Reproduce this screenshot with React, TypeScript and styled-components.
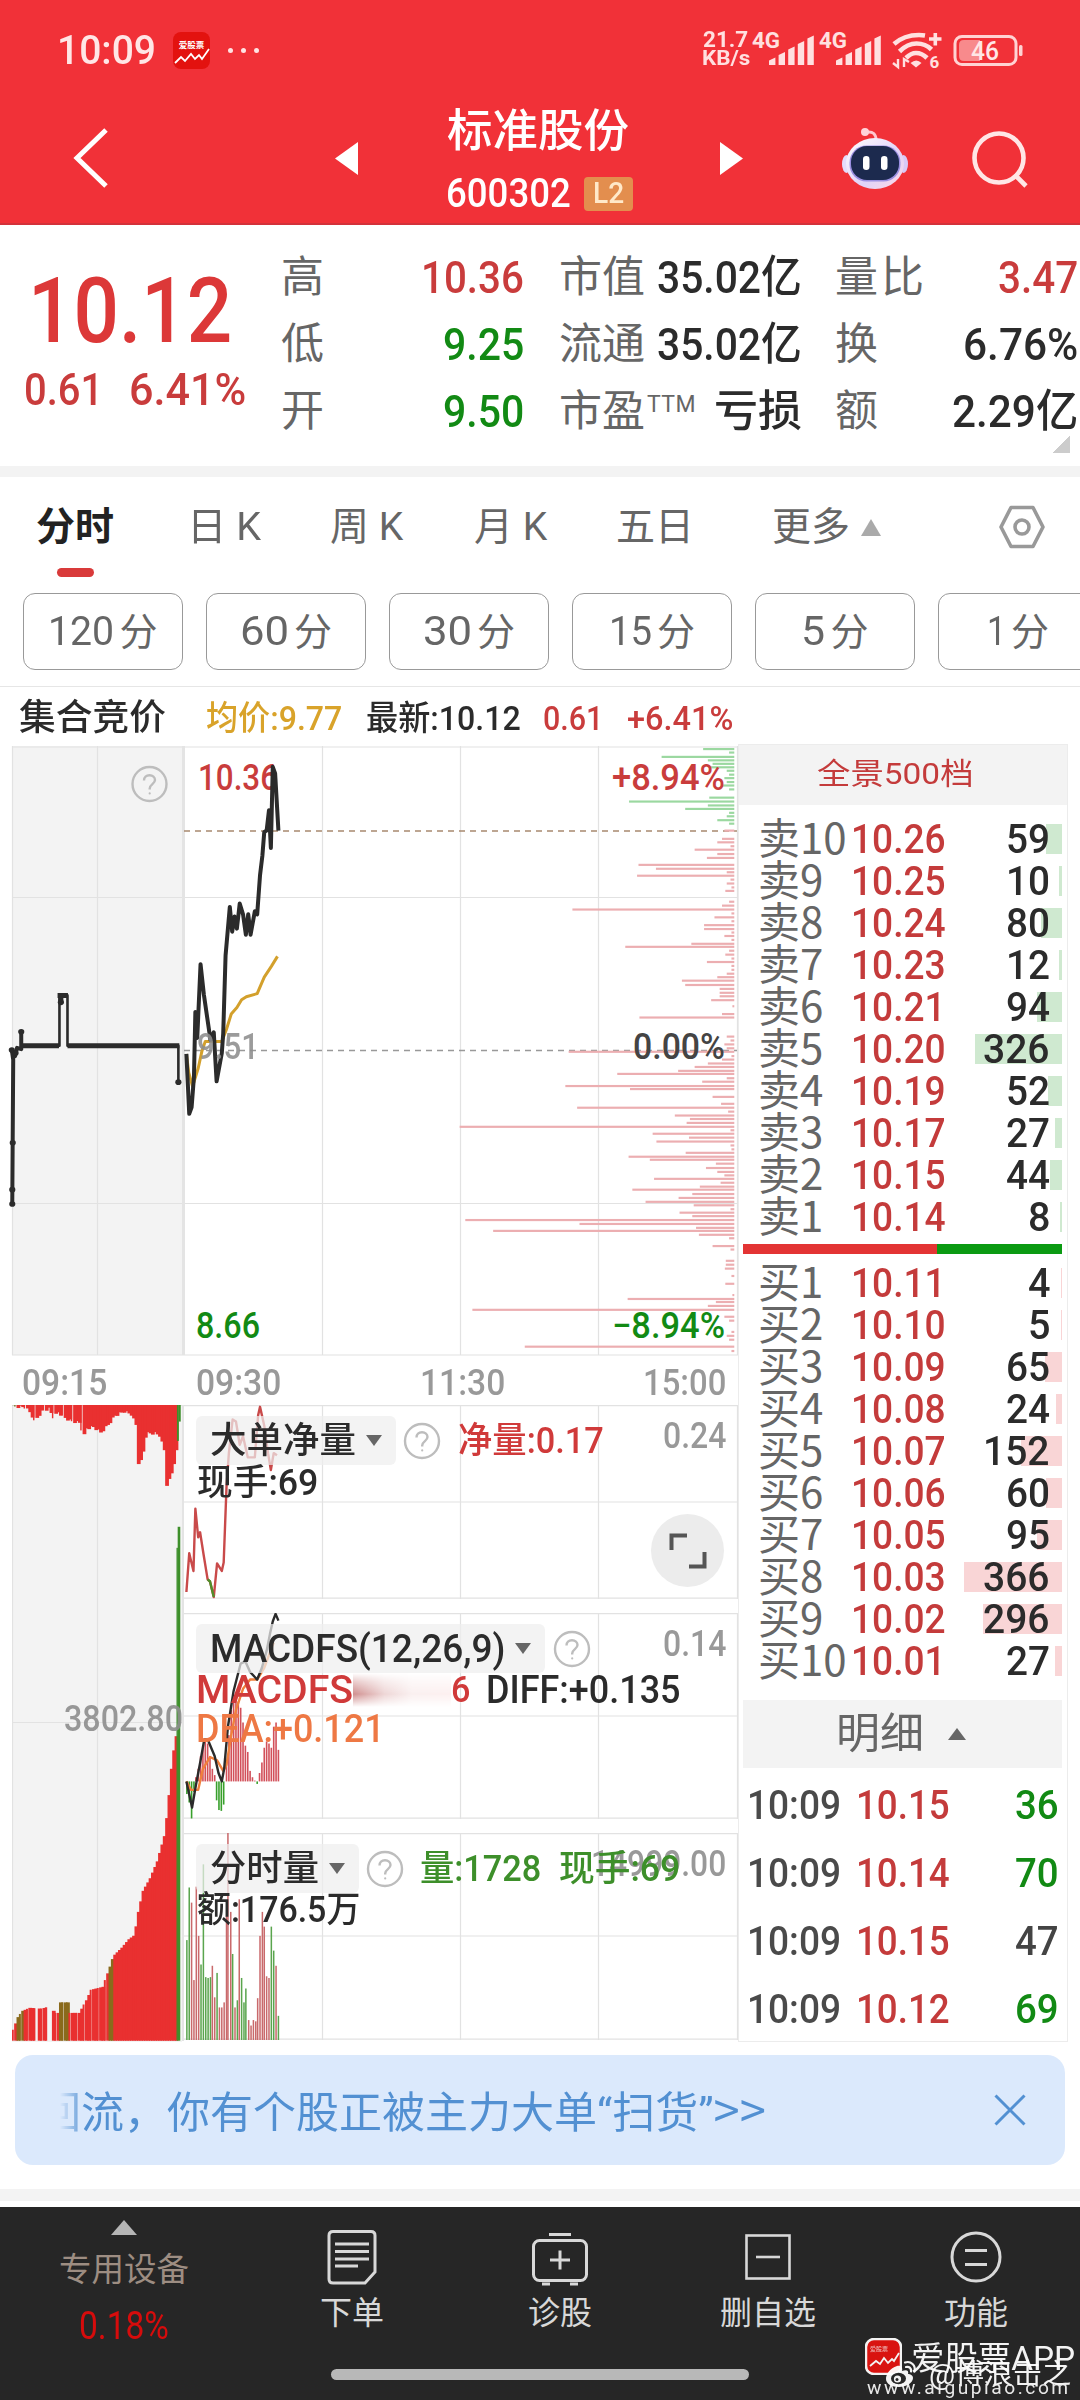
import React, { useLayoutEffect, useRef, useState } from "react";
import styled, { createGlobalStyle } from "styled-components";

const RED = "#d93a3a";
const GREEN = "#128a14";
const INK = "#2b2b2b";
const GREY = "#666";
const MUTED = "#999";
const LINE = "#e2e2e2";
const FONT = `Roboto, "Noto Sans CJK SC", sans-serif`;

const Global = createGlobalStyle`
  * { box-sizing: border-box; }
  html, body { margin: 0; padding: 0; background: #fff; }
  body { font-family: ${FONT}; color: ${INK}; overflow-x: hidden; }
  svg { display: block; flex: none; }
`;

/* ---------- text fitted to a column width ---------- */
const FitBox = styled.span<{ $w: number; $size: number; $color?: string; $weight?: number; $ml?: number }>`
  display: block;
  flex: none;
  width: ${(p) => p.$w}px;
  height: ${(p) => p.$size}px;
  margin-left: ${(p) => p.$ml ?? 0}px;
  font-size: ${(p) => p.$size}px;
  line-height: ${(p) => p.$size}px;
  font-weight: ${(p) => p.$weight ?? 400};
  color: ${(p) => p.$color ?? INK};
  white-space: pre;
`;
const FitInner = styled.span`
  display: inline-block;
  transform-origin: 0 50%;
`;
type FitProps = { w: number; size: number; color?: string; weight?: number; ml?: number; children: React.ReactNode };
function Fit({ w, size, color, weight, ml, children }: FitProps) {
  const ref = useRef<HTMLSpanElement>(null);
  const [k, setK] = useState(1);
  useLayoutEffect(() => {
    if (ref.current) setK(w / ref.current.offsetWidth);
  }, [w, size, weight]);
  return (
    <FitBox $w={w} $size={size} $color={color} $weight={weight} $ml={ml}>
      <FitInner ref={ref} style={{ transform: `scaleX(${k})` }}>{children}</FitInner>
    </FitBox>
  );
}

/* ---------- page ---------- */
const Page = styled.div`
  width: 1080px;
  height: 2400px;
  overflow: hidden;
  background: #fff;
  display: flex;
  flex-direction: column;
`;
const Header = styled.header`
  height: 225px;
  flex: none;
  background: #f13138;
  border-bottom: 2px solid #d3323a;
`;
const StatusBar = styled.div`
  height: 100px;
  display: flex;
  align-items: center;
  padding-left: 57px;
`;
const AppIconWrap = styled.div`
  margin-left: 17px;
`;
const Dots = styled.div`
  display: flex;
  gap: 8px;
  margin-left: 18px;
  i { width: 5px; height: 5px; border-radius: 50%; background: #ffe3e3; }
`;
const Speed = styled.div`
  margin-left: 443px;
  padding-bottom: 2px;
`;
const Status = styled.div`
  margin-left: 2px;
`;
const NavBar = styled.nav`
  height: 117px;
  display: flex;
  align-items: center;
  padding-left: 70px;
`;
const NavItem = styled.div<{ $ml?: number }>`
  margin-left: ${(p) => p.$ml ?? 0}px;
`;
const Title = styled.div`
  margin-left: 89px;
  width: 190px;
  padding-top: 6px;
`;
const CodeRow = styled.div`
  display: flex;
  align-items: center;
  gap: 13px;
  margin-top: 19px;
`;
const Badge = styled.div`
  width: 49px;
  height: 34px;
  border-radius: 4px;
  background: #e38e4e;
  display: flex;
  align-items: center;
  justify-content: center;
`;

const Quote = styled.section`
  height: 241px;
  flex: none;
  display: flex;
  padding-top: 19px;
`;
const PriceBlock = styled.div`
  width: 281px;
  padding: 22px 0 0 28px;
`;
const ChangeRow = styled.div`
  display: flex;
  gap: 26px;
  margin-top: 10px;
  margin-left: -4px;
`;
const StatColumn = styled.div<{ $gap: number }>`
  width: 243px;
  flex: none;
  margin-right: ${(p) => p.$gap}px;
`;
const StatRow = styled.div`
  height: 67px;
  display: flex;
  align-items: center;
  justify-content: space-between;
`;
const StatLabel = styled.div<{ $ls?: number }>`
  display: flex;
  font-size: 43px;
  line-height: 43px;
  letter-spacing: ${(p) => p.$ls ?? 0}px;
  color: ${GREY};
  sup { font-size: 23px; line-height: 23px; margin: 3px 0 0 2px; letter-spacing: .4px; }
`;
const Corner = styled.div`
  align-self: flex-end;
  flex: none;
  width: 18px;
  height: 18px;
  margin: 0 0 13px -26px;
  background: linear-gradient(135deg, transparent 50%, #ccc 50%);
`;
const Strip = styled.div<{ $h: number }>`
  height: ${(p) => p.$h}px;
  flex: none;
  background: #f3f3f3;
`;

const Tabs = styled.div`
  height: 100px;
  flex: none;
  display: grid;
  grid-template-columns: 155px 139px 145px 141px 156px 225px 60px;
  padding: 0 0 0 36px;
  align-items: center;
`;
const Tab = styled.div<{ $on?: boolean }>`
  position: relative;
  display: flex;
  align-items: center;
  gap: 11px;
  height: 100px;
  font-size: 39px;
  line-height: 39px;
  font-weight: ${(p) => (p.$on ? 700 : 400)};
  color: ${(p) => (p.$on ? "#222" : GREY)};
  &::after {
    content: "";
    display: ${(p) => (p.$on ? "block" : "none")};
    position: absolute;
    left: 21px;
    bottom: 0;
    width: 37px;
    height: 9px;
    border-radius: 5px;
    background: ${RED};
  }
`;
const Periods = styled.div`
  height: 110px;
  flex: none;
  display: flex;
  gap: 23px;
  padding: 16px 0 0 23px;
  border-bottom: 1px solid #e6e6e6;
  overflow: hidden;
`;
const Period = styled.div`
  width: 160px;
  height: 77px;
  flex: none;
  border: 1.5px solid #999;
  border-radius: 12px;
  display: flex;
  align-items: center;
  justify-content: center;
  gap: 5px;
  color: ${GREY};
  font-size: 38px;
  line-height: 40px;
`;
const InfoRow = styled.div`
  height: 57px;
  flex: none;
  display: flex;
  align-items: center;
  padding: 4px 0 0 19px;
`;

const Body = styled.main`
  height: 1301px;
  flex: none;
  display: grid;
  grid-template-columns: 738px 330px;
`;
const Charts = styled.div`
  padding-top: 2px;
`;
const Axis = styled.div`
  height: 49px;
  display: flex;
  align-items: center;
  padding: 4px 0 0 22px;
`;
const Lower = styled.div`
  display: flex;
  padding-left: 12px;
`;
const SubPanels = styled.div`
  display: flex;
  flex-direction: column;
  gap: 14px;
`;
const Panel = styled.div<{ $h: number }>`
  position: relative;
  width: 554px;
  height: ${(p) => p.$h}px;
`;
const Backdrop = styled.div`
  position: absolute;
  inset: 0;
`;
const PanelBody = styled.div`
  position: relative;
  padding: 11px 14px 0 12px;
`;
const PanelRow = styled.div`
  display: flex;
  align-items: center;
  height: 49px;
`;
const ReadRow = styled.div<{ $h?: number }>`
  display: flex;
  align-items: center;
  height: ${(p) => p.$h ?? 38}px;
`;
const Chip = styled.div`
  height: 49px;
  display: flex;
  align-items: center;
  gap: 10px;
  padding: 0 14px;
  border-radius: 6px;
  background: rgba(238, 238, 238, 0.72);
`;
const Help = styled.div<{ $ml?: number }>`
  margin-left: ${(p) => p.$ml ?? 9}px;
`;
const ScaleMax = styled.div`
  position: absolute;
  right: 12px;
  top: 13px;
`;
const Expand = styled.div`
  position: absolute;
  right: 14px;
  top: 109px;
  width: 73px;
  height: 73px;
  border-radius: 50%;
  background: #ececec;
  display: flex;
  align-items: center;
  justify-content: center;
`;
const Smear = styled.div`
  width: 98px;
  height: 34px;
  background: linear-gradient(90deg, #d08f8f 0, #eed6d6 32%, #faf0f0 60%, #fdf0f0 100%);
  -webkit-mask-image: linear-gradient(180deg, transparent, rgba(0,0,0,.45) 25%, #000 62%, transparent);
  mask-image: linear-gradient(180deg, transparent, rgba(0,0,0,.45) 25%, #000 62%, transparent);
`;

const Book = styled.aside`
  height: 1298px;
  border: 1px solid #ececec;
  padding-left: 4px;
  background: #fff;
`;
const BookHead = styled.div`
  height: 60px;
  margin: 0 0 0 -4px;
  padding: 0 15px 2px 0;
  display: flex;
  align-items: center;
  justify-content: center;
  background: #f3f3f3;
`;
const Levels = styled.div`
  padding-top: 13px;
`;
const Level = styled.div`
  position: relative;
  height: 42px;
  width: 319px;
  display: flex;
  align-items: center;
  padding-left: 15px;
`;
const LevelName = styled.div`
  width: 93px;
  flex: none;
  font: 400 42px/42px "Noto Sans CJK SC", sans-serif;
  height: 48px;
  color: ${GREY};
  white-space: nowrap;
`;
const Qty = styled.div`
  flex: 1;
  display: flex;
  justify-content: flex-end;
  padding-right: 12px;
  position: relative;
`;
const Depth = styled.div<{ $tone: string }>`
  position: absolute;
  right: 0;
  top: 6px;
  height: 30px;
  background: ${(p) => p.$tone};
`;
const Balance = styled.div`
  display: flex;
  width: 319px;
  height: 10px;
  margin: 6px 0 -5px;
  background: linear-gradient(90deg, #e33434 0 194px, #0b9a12 194px);
`;
const DetailHead = styled.div`
  height: 68px;
  width: 319px;
  margin-top: 18px;
  padding-left: 94px;
  display: flex;
  align-items: center;
  gap: 24px;
  background: #f3f3f3;
`;
const Trades = styled.div`
  padding-top: 4px;
`;
const Trade = styled.div`
  height: 67.8px;
  width: 316px;
  display: flex;
  align-items: center;
  padding-left: 4px;
`;
const TradeQty = styled.div`
  flex: 1;
  display: flex;
  justify-content: flex-end;
`;

const Notice = styled.div`
  height: 110px;
  flex: none;
  margin: 10px 15px 24px;
  border-radius: 18px;
  background: #dbe9fc;
  display: flex;
  align-items: center;
  justify-content: space-between;
  padding: 0 39px 0 45px;
`;
const NoticeClip = styled.div`
  width: 730px;
  overflow: hidden;
  -webkit-mask-image: linear-gradient(90deg, transparent, #000 26px);
  mask-image: linear-gradient(90deg, transparent, #000 26px);
`;
const NoticeText = styled.div`
  margin-left: -22px;
  color: #5290d2;
  font-size: 43px;
  line-height: 56px;
  white-space: nowrap;
  b { font: 400 47px/56px "Noto Sans CJK SC", sans-serif; }
`;

const Footer = styled.footer`
  position: relative;
  height: 193px;
  flex: none;
  margin-top: 6px;
  background: #262626;
  display: grid;
  grid-template-columns: 248px repeat(4, 208px);
`;
const Device = styled.div`
  display: flex;
  flex-direction: column;
  align-items: center;
  padding-top: 13px;
`;
const DeviceName = styled.div`
  margin-top: 17px;
  font-size: 32.5px;
  line-height: 36px;
  color: #9d8d82;
`;
const DeviceRate = styled.div`
  margin-top: 19px;
`;
const Tool = styled.div`
  display: flex;
  flex-direction: column;
  align-items: center;
  padding-top: 20px;
  gap: 6px;
  color: #d8d8d8;
  font-size: 32px;
  line-height: 40px;
`;
const HomeBar = styled.div`
  position: absolute;
  left: 331px;
  bottom: 20px;
  width: 418px;
  height: 11px;
  border-radius: 6px;
  background: #b8b8b8;
`;
const Watermark = styled.div`
  position: absolute;
  left: 865px;
  top: 131px;
  width: 215px;
  height: 62px;
  color: #fff;
`;
const MarkLine = styled.div<{ $x: number; $y: number }>`
  position: absolute;
  left: ${(p) => p.$x}px;
  top: ${(p) => p.$y}px;
  opacity: 0.95;
`;
const Spaced = styled.span`
  letter-spacing: 2.5px;
`;

/* ---------- icons ---------- */
const AppIcon = ({ rim }: { rim?: boolean }) => (
  <svg width="37" height="37" viewBox="0 0 37 37">
    <rect x={rim ? 1 : 0} y={rim ? 1 : 0} width={rim ? 35 : 37} height={rim ? 35 : 37} rx="8" fill="#e3120f" stroke={rim ? "#fff" : "none"} strokeWidth="2.5" />
    <text x={rim ? 14 : 18.5} y={rim ? 13 : 15.5} fontSize={rim ? 6 : 8.5} fontWeight="700" fill="#fff" textAnchor="middle" fontFamily="Noto Sans CJK SC, sans-serif" opacity={rim ? 0.6 : 1}>爱股票</text>
    <path d={rim ? "M5 28L11 23L15 26L19 20L23 25L27 21L29 23L34 15" : "M2 31L8 25L12 29L18 22L22 27L26 23L29 27L36 17"} fill="none" stroke="#fff" strokeWidth="1.8" />
  </svg>
);
const Triangle = ({ w, h, color, dir }: { w: number; h: number; color: string; dir: "up" | "down" | "left" | "right" }) => {
  const d = {
    up: `M0 ${h}L${w / 2} 0L${w} ${h}Z`,
    down: `M0 0H${w}L${w / 2} ${h}Z`,
    left: `M${w} 0V${h}L0 ${h / 2}Z`,
    right: `M0 0V${h}L${w} ${h / 2}Z`,
  }[dir];
  return <svg width={w} height={h}><path d={d} fill={color} /></svg>;
};
const HelpIcon = () => (
  <svg width="38" height="38" viewBox="0 0 38 38" fill="none" stroke="#bdbdbd" strokeWidth="2.4">
    <circle cx="19" cy="19" r="17" />
    <path d="M13.5 15.5c0-3.2 2.3-5.3 5.5-5.3s5.5 2 5.5 4.9c0 3.8-5.3 4.2-5.3 8.3v1" />
    <circle cx="19.2" cy="28.4" r="1.1" fill="#bdbdbd" stroke="none" />
  </svg>
);
const bars = (x: number) =>
  [0, 1, 2, 3, 4].map((i) => {
    const top = [58.5, 53, 47.5, 42, 36.5][i];
    return <path key={i} d={`M${x + i * 9.6} ${top + 2}l6.400 -3V65h-6.400Z`} fill="#ffe0e0" />;
  });
const Signals = () => (
  <svg width="275" height="44" viewBox="751 28 275 44" fontFamily={FONT}>
    <g fill="#ffe0e0" fontSize="22" fontWeight="700">
      <text x="751" y="48" textLength="28" lengthAdjust="spacingAndGlyphs">4G</text>
      <text x="818" y="48" textLength="28" lengthAdjust="spacingAndGlyphs">4G</text>
      <text x="928.5" y="68" fontSize="17">6</text>
    </g>
    {bars(768)}
    {bars(835)}
    <g fill="none" stroke="#ffe0e0" strokeWidth="4.600">
      <path d="M893 44q10-9 25-9 3 0 6 .5" />
      <path d="M898.5 51.5q8-8 17-8 9 0 15 6" />
      <path d="M905 58q5-5 10-5 6 0 11 5" />
      <path d="M928 39h12.500M934.300 33v12.500" strokeWidth="3.600" />
      <path d="M897 59v8l-5-4M903 67v-8l5 3" strokeWidth="2.400" />
    </g>
    <path d="M909.5 63q6-5 11 0l-5.500 4.500z" fill="#ffe0e0" />
    <rect x="954" y="36.500" width="61" height="28" rx="7" fill="none" stroke="#ffd3d3" strokeWidth="3" />
    <path d="M963 40h16v21h-16q-5 0-5-5v-11q0-5 5-5z" fill="#f88a8c" />
    <rect x="1018" y="45" width="3.500" height="11" rx="1.500" fill="#ffd3d3" />
    <text x="970" y="59.500" fontSize="25" fontWeight="500" fill="#ffe6e6" textLength="28" lengthAdjust="spacingAndGlyphs">46</text>
  </svg>
);
const Robot = () => (
  <svg width="68" height="64" viewBox="0 0 68 64">
    <defs>
      <linearGradient id="shell" x1="0" y1="0" x2="1" y2="1">
        <stop offset="0" stopColor="#fff" />
        <stop offset=".6" stopColor="#e0d2f8" />
        <stop offset="1" stopColor="#ffd9e6" />
      </linearGradient>
    </defs>
    <path d="M26 5q9-1 9 8" fill="none" stroke="#ffc7d0" strokeWidth="3" />
    <circle cx="24" cy="5" r="4" fill="#ffd3da" />
    <ellipse cx="5.500" cy="37" rx="4.500" ry="9" fill="#e4dcfb" />
    <ellipse cx="62.500" cy="37" rx="4.500" ry="9" fill="#d9c9f7" />
    <ellipse cx="34" cy="36.500" rx="29" ry="25.500" fill="url(#shell)" />
    <rect x="8.500" y="18.500" width="51" height="36" rx="17" fill="#9a8fe0" />
    <rect x="10" y="19" width="48" height="34" rx="16" fill="#1c2a4e" />
    <rect x="22" y="29" width="6.500" height="14" rx="3.200" fill="#fff" />
    <rect x="40" y="29" width="6.500" height="14" rx="3.200" fill="#fff" />
  </svg>
);

/* ---------- chart data ---------- */
const asks: [number, number][] = [[44, 1490], [52, 1545], [62, 1402], [70, 1500], [78, 1510], [86, 1505], [94, 1540], [103, 1545], [111, 1535], [120, 1540], [128, 1530], [137, 1545], [156, 1503], [165, 1333], [174, 1500], [182, 1452], [191, 1545], [199, 1540], [208, 1520], [216, 1545]];
const bids: [number, number][] = [[232, 1535], [251, 1530], [259, 1520], [268, 1548], [276, 1472], [286, 1520], [295, 1498], [311, 1353], [320, 1390], [328, 1540], [336, 1350], [345, 1548], [354, 1540], [363, 1550], [371, 1537], [396, 1545], [405, 1530], [414, 1213], [423, 1550], [432, 1514], [441, 1550], [450, 1492], [459, 1492], [467, 1550], [475, 1535], [484, 1550], [493, 1465], [500, 1325], [509, 1545], [518, 1537], [527, 1550], [535, 1498], [544, 1550], [553, 1550], [562, 1540], [570, 1520], [578, 1445], [588, 1452], [597, 1525], [606, 1525], [614, 1525], [623, 1507], [637, 1552], [655, 1530], [663, 1355], [707, 1540], [716, 1548], [725, 1535], [734, 1540], [742, 1205], [752, 1550], [760, 1530], [769, 1500], [777, 1472], [786, 1437], [793, 1308], [803, 1540], [811, 1488], [821, 1198], [828, 1335], [846, 1510], [862, 1528], [871, 1223], [880, 1543], [889, 1430], [897, 1462], [906, 1455], [915, 974], [923, 1548], [931, 1383], [940, 1460], [949, 1391], [958, 1548], [967, 1550], [975, 1453], [984, 1332], [991, 1377], [1000, 1517], [1010, 1496], [1019, 1520], [1027, 1535], [1035, 1386], [1044, 1527], [1053, 1483], [1060, 1340], [1070, 1467], [1079, 1438], [1088, 1368], [1096, 1470], [1105, 1548], [1113, 1440], [1121, 1467], [1130, 986], [1139, 1228], [1148, 1475], [1155, 1045], [1164, 1481], [1172, 1545], [1190, 1510], [1198, 1548], [1224, 1538], [1233, 1538], [1242, 1536], [1259, 1550], [1277, 1537], [1303, 1552], [1312, 1330], [1319, 1517], [1328, 1500], [1337, 1001], [1353, 1535], [1362, 1545], [1388, 1550], [1397, 1540], [1406, 1545], [1422, 1112], [1432, 1550]];
const PRICE = "395,747 401,885 406,870 411,800 414,650 418,710 425,540 432,610 446,715 453,697 459,810 470,745 473,700 478,520 487,408 492,465 497,430 502,458 508,400 515,425 521,472 526,425 531,472 540,418 545,425 551,335 556,290 560,235 565,232 570,185 574,272 578,85 583,100 590,232";
const AVERAGE = "395,747 400,790 408,822 420,780 428,740 435,718 470,718 480,690 490,655 502,640 512,622 522,615 545,608 552,590 560,570 575,545 588,522";
const NET = "395,480 401,388 410,430 414,282 420,350 424,338 432,395 440,450 445,455 453,492 460,412 470,430 474,410 480,230 485,150 493,70 500,75 508,130 515,110 525,160 540,160 547,60 551,40 560,85 568,150 574,190 580,150 587,155";
const DIFF = "395,930 407,992 415,940 425,880 433,830 440,830 455,870 463,910 470,930 475,900 483,800 495,715 510,650 520,645 530,670 545,688 555,660 565,620 572,580 578,550 584,532 590,548";
const DEA = "395,930 405,950 420,950 430,900 445,872 460,880 473,905 480,890 490,820 500,760 515,710 530,688 545,688 560,660 580,600";
const macd: [number, number][] = [[396, 960], [401, 980], [406, 1018], [411, 955], [415, 920], [420, 900], [425, 870], [430, 845], [435, 830], [440, 840], [445, 870], [450, 900], [455, 915], [459, 975], [464, 998], [469, 1000], [474, 985], [480, 880], [485, 820], [490, 760], [495, 740], [500, 730], [505, 740], [510, 755], [515, 790], [520, 845], [525, 860], [530, 905], [535, 920], [540, 928], [545, 936], [550, 910], [555, 885], [560, 850], [565, 835], [570, 840], [575, 850], [580, 800], [585, 790], [590, 855]];
const volume: [number, number, number][] = [[396, 1307, 1], [401, 1182, 1], [406, 1218, 0], [411, 1402, 0], [416, 1180, 0], [421, 1297, 0], [426, 1365, 1], [431, 1127, 1], [436, 1395, 1], [441, 1397, 1], [446, 1395, 1], [450, 1368, 0], [455, 1443, 0], [460, 1385, 1], [465, 1467, 0], [470, 1467, 0], [475, 1455, 0], [480, 1250, 0], [483, 1050, 0], [489, 1240, 0], [493, 1340, 1], [498, 1467, 0], [503, 1450, 1], [507, 1210, 0], [512, 1397, 1], [517, 1455, 1], [521, 1422, 1], [527, 1497, 0], [532, 1510, 0], [537, 1497, 0], [542, 1500, 0], [546, 1445, 0], [551, 1297, 0], [556, 1240, 0], [560, 1275, 0], [565, 1393, 0], [570, 1397, 0], [575, 1275, 1], [580, 1332, 1], [585, 1368, 0], [590, 1487, 1]];
const hangCurve = [[25, 36], [50, 38], [62, 52], [70, 72], [78, 58], [88, 45], [100, 42], [112, 65], [118, 48], [130, 60], [145, 70], [165, 75], [175, 105], [180, 88], [195, 85], [210, 98], [225, 80], [240, 58], [260, 48], [275, 55], [285, 80], [290, 170], [297, 165], [306, 100], [325, 100], [335, 105], [345, 140], [348, 226], [358, 205], [366, 165], [376, 110]];
const pileCurve = [[25, 1520], [35, 1490], [45, 1475], [60, 1468], [85, 1470], [100, 1465], [115, 1480], [165, 1480], [180, 1450], [190, 1425], [215, 1418], [230, 1370], [237, 1345], [255, 1325], [270, 1305], [282, 1295], [290, 1240], [300, 1190], [315, 1160], [330, 1120], [345, 1060], [352, 1000], [360, 900], [368, 830], [376, 800]];
const at = (c: number[][], x: number) => {
  const i = Math.max(1, c.findIndex((p) => p[0] >= x));
  const [a, b] = [c[i - 1], c[i]];
  return a[1] + ((b[1] - a[1]) * (x - a[0])) / (b[0] - a[0]);
};
const steps = Array.from({ length: 70 }, (_, i) => 25 + i * 5);

const MAIN = "translate(0 730) scale(.4719 .43367)";
const SUB = "translate(0 1390) scale(.4719 .42088)";

const MainChart = () => (
  <svg width="738" height="610" viewBox="0 746 738 610" fontFamily={FONT}>
    <rect x="12" y="746" width="170" height="609" fill="#f3f3f3" />
    <path d="M12 747H738M12 897.500H738M12 1203.500H738M12 1355H738M12.500 746V1355M97.500 746V1355M322.500 746V1355M460.500 746V1355M598.500 746V1355M737.500 746V1355" stroke={LINE} strokeWidth="1.200" />
    <path d="M183.500 746V1355" stroke="#e4e4e4" strokeWidth="3" />
    <path d="M184 831H737" stroke="#a8896f" strokeWidth="1.600" strokeDasharray="6 5" />
    <path d="M184 1050.500H737" stroke="#999" strokeWidth="1.600" strokeDasharray="6 5" />
    <g transform={MAIN}>
      {asks.map(([y, x]) => <rect key={y} x={x} y={y - 2.500} width={1556 - x} height="5" fill="#9bd8a0" />)}
      {bids.map(([y, x]) => <rect key={y} x={x} y={y - 2.500} width={1556 - x} height="5" fill="#ecaeb1" />)}
    </g>
    <g fontSize="36" fontWeight="500">
      <text x="198" y="790" textLength="80" lengthAdjust="spacingAndGlyphs" fill="#c93c3c">10.36</text>
      <text x="196" y="1338" textLength="64" lengthAdjust="spacingAndGlyphs" fill={GREEN}>8.66</text>
      <text x="612" y="790" textLength="113" lengthAdjust="spacingAndGlyphs" fill="#c93c3c">+8.94%</text>
      <text x="633" y="1059" textLength="92" lengthAdjust="spacingAndGlyphs" fill="#444">0.00%</text>
      <text x="612" y="1338" textLength="113" lengthAdjust="spacingAndGlyphs" fill={GREEN}>−8.94%</text>
    </g>
    <g transform={MAIN} fill="none" strokeLinejoin="round">
      <polyline points={AVERAGE} stroke="#d3a02c" strokeWidth="3" vectorEffect="non-scaling-stroke" />
      <polyline points={PRICE} stroke="#2b2b2b" strokeWidth="4" vectorEffect="non-scaling-stroke" />
      <polyline points="26,1093 28,760 25,738 32,752 36,733 45,736 45,694" stroke="#2b2b2b" strokeWidth="4" vectorEffect="non-scaling-stroke" />
      <polyline points="45,728 126,728 126,612 143,612 143,728 378,728 378,812" stroke="#2b2b2b" strokeWidth="2.600" vectorEffect="non-scaling-stroke" />
      <path d="M143 728H380M45 728H125M122 612H144M129 612V630" stroke="#2b2b2b" strokeWidth="5" vectorEffect="non-scaling-stroke" />
      {[[26, 1093], [26, 1060], [27, 952], [25, 738], [33, 745], [45, 696], [378, 812], [129, 628]].map(([x, y]) => (
        <ellipse key={`${x}-${y}`} cx={x} cy={y} rx="6.500" ry="6.500" fill="#2b2b2b" />
      ))}
    </g>
    <text x="197" y="1059" textLength="62" lengthAdjust="spacingAndGlyphs" fontSize="36" fontWeight="500" fill="#8e8e8e" opacity=".88">9.51</text>
    <g transform="translate(130.500 765)"><HelpIcon /></g>
  </svg>
);

const AuctionVolume = () => (
  <svg width="172" height="637" viewBox="12 1405 172 637" fontFamily={FONT}>
    <rect x="12" y="1405" width="170" height="637" fill="#f3f3f3" />
    <path d="M12.500 1405V2041M97.500 1405V2041M12 1722.500H184M12 1405.500H184" stroke={LINE} strokeWidth="1.200" />
    <path d="M183.500 1405V2041" stroke="#e4e4e4" strokeWidth="3" />
    <g transform={SUB}>
      {steps.map((x, i) => {
        const gap = x < 175 && i % 4 === 1;
        return <rect key={`h${x}`} x={x} y="35" width={gap ? 3 : 8} height={at(hangCurve, x) - 35 + (i % 3) * 3} fill={i < 2 ? "#7d7a2c" : "#e93030"} />;
      })}
      {steps.map((x) => {
        if ((x >= 75 && x < 80) || (x >= 100 && x < 110)) return null;
        const olive = (x >= 35 && x < 50) || (x >= 125 && x < 143) || (x >= 230 && x < 236);
        const lift = x >= 125 && x < 143 ? 25 : 0;
        const y = at(pileCurve, x) - lift;
        const next = (x >= 70 && x < 75) || (x >= 95 && x < 110);
        return <rect key={`p${x}`} x={x} y={y} width={next ? 5 : x < 225 && x % 15 === 10 ? 4.200 : Math.min(8, 378 - x)} height={1546 - y} fill={olive ? "#8a6a1c" : "#e93030"} />;
      })}
      <rect x="374" y="375" width="3" height="1171" fill="#3d8f2a" />
      <rect x="376.500" y="325" width="5.500" height="1221" fill="#3d8f2a" />
      <rect x="375" y="35" width="4" height="86" fill="#3d8f2a" />
      <rect x="379" y="35" width="4" height="40" fill="#3d8f2a" />
    </g>
    <text x="64" y="1731" textLength="119" lengthAdjust="spacingAndGlyphs" fontSize="36" fontWeight="500" fill="#8e8e8e" opacity=".9">3802.80</text>
  </svg>
);

function PanelGrid({ top, h, mid, children }: { top: number; h: number; mid: number; children: React.ReactNode }) {
  return (
    <Backdrop>
      <svg width="554" height={h} viewBox={`184 ${top} 554 ${h}`}>
        <path d={`M184 ${top + 0.6}H738M184 ${mid}H738M184 ${top + h - 0.8}H738M322.5 ${top}v${h}M460.5 ${top}v${h}M598.5 ${top}v${h}M737.500 ${top}v${h}`} stroke={LINE} strokeWidth="1.200" />
        <g transform={SUB} fill="none" strokeLinejoin="round">{children}</g>
      </svg>
    </Backdrop>
  );
}

const sells: [string, number][] = [["10.26", 59], ["10.25", 10], ["10.24", 80], ["10.23", 12], ["10.21", 94], ["10.20", 326], ["10.19", 52], ["10.17", 27], ["10.15", 44], ["10.14", 8]];
const buys: [string, number][] = [["10.11", 4], ["10.10", 5], ["10.09", 65], ["10.08", 24], ["10.07", 152], ["10.06", 60], ["10.05", 95], ["10.03", 366], ["10.02", 296], ["10.01", 27]];
const trades: [string, number, string][] = [["10.15", 36, GREEN], ["10.14", 70, GREEN], ["10.15", 47, "#444"], ["10.12", 69, GREEN]];

function LevelRow({ name, price, qty, tone }: { name: string; price: string; qty: number; tone: string }) {
  return (
    <Level>
      <Depth $tone={tone} style={{ width: Math.max(1, qty * 0.267) }} />
      <LevelName>{name}</LevelName>
      <Fit w={95} size={41} weight={500} color="#c43b3b">{price}</Fit>
      <Qty><Fit w={String(qty).length * 22.200} size={41} weight={500}>{qty}</Fit></Qty>
    </Level>
  );
}

export default function App() {
  return (
    <Page>
      <Global />
      <Header>
        <StatusBar>
          <Fit w={99} size={41} weight={500} color="#ffe6e6">10:09</Fit>
          <AppIconWrap><AppIcon /></AppIconWrap>
          <Dots><i /><i /><i /></Dots>
          <Speed>
            <Fit w={45} size={22} ml={1} weight={700} color="#ffe0e0">21.7</Fit>
            <FitLow><Fit w={48} size={21} weight={700} color="#ffe0e0">KB/s</Fit></FitLow>
          </Speed>
          <Status><Signals /></Status>
        </StatusBar>
        <NavBar>
          <NavItem>
            <svg width="40" height="62" viewBox="0 0 40 62"><path d="M36 2L7 30L36 58" fill="none" stroke="#fff" strokeWidth="5" /></svg>
          </NavItem>
          <NavItem $ml={225}><Triangle w={23} h={33} color="#fff" dir="left" /></NavItem>
          <Title>
            <Fit w={182} size={45} weight={500} color="#fff">标准股份</Fit>
            <CodeRow>
              <Fit w={125} size={41} ml={-1} weight={500} color="#fff">600302</Fit>
              <Badge><Fit w={31} size={29} weight={500} color="#ffe9c9">L2</Fit></Badge>
            </CodeRow>
          </Title>
          <NavItem $ml={83}><Triangle w={23} h={33} color="#fff" dir="right" /></NavItem>
          <NavItem $ml={98}><Robot /></NavItem>
          <NavItem $ml={61}>
            <svg width="60" height="60" viewBox="0 0 60 60" fill="none" stroke="#ffe6e6" strokeWidth="4.600">
              <circle cx="29" cy="29" r="24.500" /><path d="M45 46l11 11" />
            </svg>
          </NavItem>
        </NavBar>
      </Header>

      <Quote>
        <PriceBlock>
          <Fit w={204} size={91} weight={500} color="#dc3838">10.12</Fit>
          <ChangeRow>
            <Fit w={79} size={45} weight={500} color="#c93c3c">0.61</Fit>
            <Fit w={117} size={45} weight={500} color="#c93c3c">6.41%</Fit>
          </ChangeRow>
        </PriceBlock>
        <StatColumn $gap={35}>
          <StatRow><StatLabel>高</StatLabel><Fit w={103} size={45} color="#c93c3c" weight={500}>10.36</Fit></StatRow>
          <StatRow><StatLabel>低</StatLabel><Fit w={81} size={45} color={GREEN} weight={500}>9.25</Fit></StatRow>
          <StatRow><StatLabel>开</StatLabel><Fit w={81} size={45} color={GREEN} weight={500}>9.50</Fit></StatRow>
        </StatColumn>
        <StatColumn $gap={33}>
          <StatRow><StatLabel>市值</StatLabel><Fit w={145} size={45} weight={500}>35.02亿</Fit></StatRow>
          <StatRow><StatLabel>流通</StatLabel><Fit w={145} size={45} weight={500}>35.02亿</Fit></StatRow>
          <StatRow><StatLabel>市盈<sup>TTM</sup></StatLabel><Fit w={88} size={43} weight={500}>亏损</Fit></StatRow>
        </StatColumn>
        <StatColumn $gap={0}>
          <StatRow><StatLabel $ls={3}>量比</StatLabel><Fit w={80} size={45} color="#c93c3c" weight={500}>3.47</Fit></StatRow>
          <StatRow><StatLabel>换</StatLabel><Fit w={115} size={45} weight={500}>6.76%</Fit></StatRow>
          <StatRow><StatLabel>额</StatLabel><Fit w={126} size={45} weight={500}>2.29亿</Fit></StatRow>
        </StatColumn>
        <Corner />
      </Quote>
      <Strip $h={11} />

      <Tabs>
        <Tab $on>分时</Tab>
        <Tab><Fit w={74} size={39} ml={-4} color={GREY}>日 K</Fit></Tab>
        <Tab><Fit w={73} size={39} color={GREY}>周 K</Fit></Tab>
        <Tab><Fit w={73} size={39} ml={-1} color={GREY}>月 K</Fit></Tab>
        <Tab>五日</Tab>
        <Tab>更多<Triangle w={20} h={17} color="#aaa" dir="up" /></Tab>
        <svg width="50" height="48" viewBox="0 0 50 48" fill="none" stroke="#999" strokeWidth="3.600" strokeLinejoin="round">
          <path d="M14 4.500H36L46 24L36 43.500H14L4 24Z" /><circle cx="25" cy="24" r="7" />
        </svg>
      </Tabs>
      <Periods>
        {[["120", 66], ["60", 49], ["30", 49], ["15", 43], ["5", 24], ["1", 19]].map(([n, w]) => (
          <Period key={n}><Fit w={w as number} size={41} color={GREY}>{n}</Fit>分</Period>
        ))}
      </Periods>
      <InfoRow>
        <Fit w={147} size={36} weight={500}>集合竞价</Fit>
        <Fit w={136} size={34} ml={40} color="#d9a32a" weight={500}>均价:9.77</Fit>
        <Fit w={155} size={34} ml={24} weight={500}>最新:10.12</Fit>
        <Fit w={60} size={34} ml={22} color="#c93c3c" weight={500}>0.61</Fit>
        <Fit w={106} size={34} ml={24} color="#c93c3c" weight={500}>+6.41%</Fit>
      </InfoRow>

      <Body>
        <Charts>
          <MainChart />
          <Axis>
            <Fit w={85} size={36} color={MUTED} weight={500}>09:15</Fit>
            <Fit w={85} size={36} color={MUTED} weight={500} ml={89}>09:30</Fit>
            <Fit w={85} size={36} color={MUTED} weight={500} ml={139}>11:30</Fit>
            <Fit w={83} size={36} color={MUTED} weight={500} ml={138}>15:00</Fit>
          </Axis>
          <Lower>
            <AuctionVolume />
            <SubPanels>
              <Panel $h={194}>
                <PanelGrid top={1405} h={194} mid={1502}>
                  <polyline points={NET} stroke="#c94a4a" strokeWidth="2.400" vectorEffect="non-scaling-stroke" />
                  <polyline points="440,450 445,455 453,492" stroke="#4f8f2a" strokeWidth="2.400" vectorEffect="non-scaling-stroke" />
                </PanelGrid>
                <PanelBody>
                  <PanelRow>
                    <Chip><Fit w={146} size={36} weight={500}>大单净量</Fit><Triangle w={16} h={11} color={GREY} dir="down" /></Chip>
                    <Help $ml={7}><HelpIcon /></Help>
                    <Fit w={146} size={36} ml={17} color="#d03a3a" weight={500}>净量:0.17</Fit>
                  </PanelRow>
                  <ReadRow $h={35}><Fit w={121} size={36} ml={1} weight={500}>现手:69</Fit></ReadRow>
                </PanelBody>
                <ScaleMax><Fit w={63} size={36} color={MUTED} weight={500}>0.24</Fit></ScaleMax>
                <Expand>
                  <svg width="40" height="38" viewBox="0 0 40 38" fill="none" stroke="#555" strokeWidth="4"><path d="M3.500 18V3.500H19M36.500 20V34.500H21" /></svg>
                </Expand>
              </Panel>
              <Panel $h={206}>
                <PanelGrid top={1613} h={206} mid={1716}>
                  {macd.map(([x, y]) => <rect key={x} x={x - 1.700} y={Math.min(930, y)} width="3.400" height={Math.abs(y - 930)} fill={y < 930 ? "#d2505a" : "#38a02c"} />)}
                  <polyline points={DEA} stroke="#f0803c" strokeWidth="2.400" vectorEffect="non-scaling-stroke" />
                  <polyline points={DIFF} stroke="#2b2b2b" strokeWidth="2.400" vectorEffect="non-scaling-stroke" />
                </PanelGrid>
                <PanelBody>
                  <PanelRow>
                    <Chip><Fit w={295} size={38} weight={500}>MACDFS(12,26,9)</Fit><Triangle w={16} h={11} color={GREY} dir="down" /></Chip>
                    <Help $ml={8}><HelpIcon /></Help>
                  </PanelRow>
                  <ReadRow $h={33}>
                    <Fit w={157} size={38} weight={500} color="#d03a3a">MACDFS</Fit>
                    <Smear />
                    <Fit w={19} size={36} weight={500} color="#d03a3a">6</Fit>
                    <Fit w={195} size={38} ml={16} weight={500}>DIFF:+0.135</Fit>
                  </ReadRow>
                  <ReadRow $h={45}><Fit w={189} size={38} weight={500} color="#ee7844">DEA:+0.121</Fit></ReadRow>
                </PanelBody>
                <ScaleMax><Fit w={63} size={36} color={MUTED} weight={500}>0.14</Fit></ScaleMax>
              </Panel>
              <Panel $h={207}>
                <PanelGrid top={1833} h={207} mid={1936}>
                  {volume.map(([x, y, g]) => <rect key={x} x={x - 1.600} y={y} width="3.200" height={1545 - y} fill={g ? "#5aa54e" : "#c9696b"} />)}
                </PanelGrid>
                <ScaleMax><Fit w={135} size={36} color={MUTED} weight={500}>14999.00</Fit></ScaleMax>
                <PanelBody>
                  <PanelRow>
                    <Chip><Fit w={109} size={36} weight={500}>分时量</Fit><Triangle w={16} h={11} color={GREY} dir="down" /></Chip>
                    <Help $ml={7}><HelpIcon /></Help>
                    <Fit w={121} size={36} ml={16} color="#3d8f2a" weight={500}>量:1728</Fit>
                    <Fit w={121} size={36} ml={18} color="#3d8f2a" weight={500}>现手:69</Fit>
                  </PanelRow>
                  <ReadRow $h={34}><Fit w={163} size={36} ml={1} weight={500}>额:176.5万</Fit></ReadRow>
                </PanelBody>
              </Panel>
            </SubPanels>
          </Lower>
        </Charts>

        <Book>
          <BookHead><Fit w={157} size={30} color="#c43b3b">全景500档</Fit></BookHead>
          <Levels>
            {sells.map(([p, q], i) => <LevelRow key={p} name={`卖${10 - i}`} price={p} qty={q} tone="#cfe9d0" />)}
          </Levels>
          <Balance />
          <Levels>
            {buys.map(([p, q], i) => <LevelRow key={p} name={`买${i + 1}`} price={p} qty={q} tone="#f9d5d6" />)}
          </Levels>
          <DetailHead><Fit w={88} size={42} ml={-1} color={GREY}>明细</Fit><Triangle w={18} h={12} color={GREY} dir="up" /></DetailHead>
          <Trades>
            {trades.map(([p, q, c], i) => (
              <Trade key={i}>
                <Fit w={94} size={41} weight={500} color="#4a4a4a">10:09</Fit>
                <Fit w={94} size={41} ml={15} weight={500} color="#c43b3b">{p}</Fit>
                <TradeQty><Fit w={44} size={41} weight={500} color={c}>{q}</Fit></TradeQty>
              </Trade>
            ))}
          </Trades>
        </Book>
      </Body>

      <Notice>
        <NoticeClip><NoticeText>回流，你有个股正被主力大单“扫货”<b>&gt;&gt;</b></NoticeText></NoticeClip>
        <svg width="32" height="32" viewBox="0 0 32 32" fill="none" stroke="#5290d2" strokeWidth="3"><path d="M1.500 1.500L30.500 30.500M30.500 1.500L1.500 30.500" /></svg>
      </Notice>
      <Strip $h={12} />

      <Footer>
        <Device>
          <Triangle w={26} h={15} color="#b5b5b5" dir="up" />
          <DeviceName>专用设备</DeviceName>
          <DeviceRate><Fit w={90} size={38} color="#d60c0c">0.18%</Fit></DeviceRate>
        </Device>
        <Tool>
          <svg width="54" height="60" viewBox="0 0 54 60" fill="none" stroke="#d8d8d8" strokeWidth="3">
            <path d="M8 4.500H46q4 0 4 4V45L40 56H8q-4 0-4-4V8.500q0-4 4-4Z" /><path d="M10 17H44M10 24.500H44M10 32H44M10 39H33" />
          </svg>
          下单
        </Tool>
        <Tool>
          <svg width="60" height="60" viewBox="0 0 60 60" fill="none" stroke="#d8d8d8" strokeWidth="3">
            <path d="M19 7.500H41" /><rect x="3.500" y="13.500" width="53" height="40" rx="6" /><path d="M12 57H20M40 57H48M20 33H40M30 23.500V42.500" />
          </svg>
          诊股
        </Tool>
        <Tool>
          <svg width="54" height="60" viewBox="0 0 54 60" fill="none" stroke="#d8d8d8" strokeWidth="2.600">
            <rect x="5.500" y="8.500" width="43" height="43" /><path d="M15 30H39" />
          </svg>
          删自选
        </Tool>
        <Tool>
          <svg width="54" height="60" viewBox="0 0 54 60" fill="none" stroke="#d8d8d8" strokeWidth="3">
            <circle cx="27" cy="30" r="24" /><path d="M16 23.500H38M16 37.500H38" />
          </svg>
          功能
        </Tool>
        <HomeBar />
        <Watermark>
          <MarkLine $x={0} $y={0}><AppIcon rim /></MarkLine>
          <MarkLine $x={46} $y={4}><Fit w={164} size={33} color="#fff">爱股票APP</Fit></MarkLine>
          <MarkLine $x={64} $y={23}><Fit w={142} size={28} color="#fff">@博浪击之</Fit></MarkLine>
          <MarkLine $x={2} $y={40}><Fit w={204} size={19} color="#f2f2f2"><Spaced>www.aigupiao.com</Spaced></Fit></MarkLine>
          <MarkLine $x={20} $y={21}>
            <svg width="34" height="30" viewBox="0 0 34 30">
              <path d="M12 7C5 9 1 15 1 20c0 5 6 8 13 8s14-4 14-9c0-3-3-4-5-4 1-3-1-5-6-3 1-3-1-6-5-5Z" fill="#fff" />
              <ellipse cx="13.500" cy="19.500" rx="7.500" ry="5.800" fill="#262626" />
              <circle cx="12.500" cy="20" r="3.600" fill="#fff" /><circle cx="12" cy="20.500" r="1.500" fill="#262626" />
              <path d="M20 3.500c6-2 11 3 9.500 9M21 8c3-.8 5.500 1 5 4.500" fill="none" stroke="#fff" strokeWidth="2.200" strokeLinecap="round" />
            </svg>
          </MarkLine>
        </Watermark>
      </Footer>
    </Page>
  );
}

const FitLow = styled.div`
  margin-top: -3px;
`;
